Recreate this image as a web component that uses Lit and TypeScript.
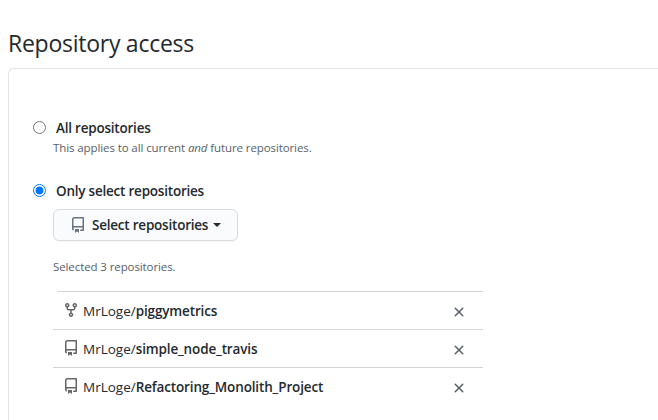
import { LitElement, html, css, svg } from "lit";
import { customElement } from "lit/decorators.js";

const REPO =
  "M2 2.5A2.5 2.5 0 014.5 0h8.75a.75.75 0 01.75.75v12.5a.75.75 0 01-.75.75h-2.5a.75.75 0 110-1.5h1.75v-2h-8a1 1 0 00-.714 1.7.75.75 0 01-1.072 1.05A2.495 2.495 0 012 11.5v-9zm10.5-1V9h-8c-.356 0-.694.074-1 .208V2.5a1 1 0 011-1h8zM5 12.25v3.25a.25.25 0 00.4.2l1.45-1.087a.25.25 0 01.3 0L8.6 15.7a.25.25 0 00.4-.2v-3.25a.25.25 0 00-.25-.25h-3.5a.25.25 0 00-.25.25z";
const FORK =
  "M5 3.25a.75.75 0 11-1.5 0 .75.75 0 011.5 0zm0 2.122a2.25 2.25 0 10-1.5 0v.878A2.25 2.25 0 005.75 8.5h1.5v2.128a2.251 2.251 0 101.5 0V8.5h1.5a2.25 2.25 0 002.25-2.25v-.878a2.25 2.25 0 10-1.5 0v.878a.75.75 0 01-.75.75h-4.5A.75.75 0 015 6.25v-.878zm3.75 7.378a.75.75 0 11-1.5 0 .75.75 0 011.5 0zm3-8.75a.75.75 0 100-1.5.75.75 0 000 1.5z";
const CLOSE =
  "M3.72 3.72a.75.75 0 011.06 0L8 6.94l3.22-3.22a.75.75 0 111.06 1.06L9.06 8l3.22 3.22a.75.75 0 11-1.06 1.06L8 9.06l-3.22 3.22a.75.75 0 01-1.06-1.06L6.94 8 3.72 4.78a.75.75 0 010-1.06z";

const icon = (d: string) =>
  html`<svg class="icon" viewBox="0 0 16 16" width="16" height="16" aria-hidden="true">${svg`<path fill-rule="evenodd" d=${d}></path>`}</svg>`;

const REPOS = [
  { owner: "MrLoge", name: "piggymetrics", kind: "fork" },
  { owner: "MrLoge", name: "simple_node_travis", kind: "repo" },
  { owner: "MrLoge", name: "Refactoring_Monolith_Project", kind: "repo" },
];

@customElement("app-root")
export class AppRoot extends LitElement {
  static styles = css`
    :host {
      display: block;
      height: 420px;
      overflow: hidden;
      box-sizing: border-box;
      padding: 25px 0 0 8px;
      background: #fff;
      color: #24292e;
      font: 13.5px/20px "Open Sans", "Noto Sans", sans-serif;
    }
    * { box-sizing: border-box; }
    h2 {
      margin: 0 0 7px;
      font-size: 23px;
      line-height: 36px;
      font-weight: 400;
      letter-spacing: -0.26px;
      white-space: nowrap;
    }
    .box {
      border: 1px solid #e1e4e8;
      border-right: 0;
      border-radius: 6px 0 0 0;
      height: 500px;
      padding: 49px 0 0 24px;
    }
    .option {
      display: flex;
      align-items: center;
      gap: 10px;
      height: 20px;
      font-weight: 600;
      letter-spacing: -0.22px;
    }
    .radio {
      width: 13px;
      height: 13px;
      margin-bottom: 2px;
      border: 1px solid #767676;
      border-radius: 50%;
      background: #fff;
    }
    .radio.on {
      border-color: #0075ff;
      background: radial-gradient(circle, #0075ff 3.6px, #fff 4.3px);
    }
    .details { padding-left: 20px; }
    .note {
      display: block;
      height: 18px;
      font-size: 11.5px;
      line-height: 18px;
      letter-spacing: -0.1px;
      color: #586069;
      white-space: nowrap;
    }
    .all .note { margin: 1px 0 24px; }
    .button {
      display: flex;
      align-items: center;
      width: 185px;
      height: 32px;
      margin: 8px 0 17px;
      padding: 0 16px;
      border: 1px solid #d9dcdf;
      border-radius: 6px;
      background: #fafbfc;
      box-shadow: 0 1px 0 rgba(27, 31, 35, 0.04);
      color: #24292e;
      font: inherit;
      font-weight: 600;
      letter-spacing: -0.22px;
      white-space: nowrap;
    }
    .button .icon { margin-right: 6px; fill: #6a737d; }
    .caret {
      margin-left: 5px;
      border: 4px solid transparent;
      border-top-color: #24292e;
      border-bottom: 0;
    }
    .icon { flex: none; fill: #586069; }
    .list {
      width: 430px;
      margin: 15px 0 0;
      padding: 0;
      list-style: none;
    }
    .list::before {
      content: "";
      display: block;
      height: 1px;
      margin-left: 4px;
      background: #d1d5da;
    }
    .row {
      display: flex;
      align-items: center;
      height: 38px;
      padding: 0 16px 0 10px;
      border-bottom: 1px solid #d1d5da;
      white-space: nowrap;
    }
    .row:last-child { border-bottom-color: transparent; }
    .kind { height: 16px; margin: 0 4px 2px 0; display: flex; }
    .kind .icon { fill: #666; }
    .name { flex: 1; display: flex; margin-top: 1px; letter-spacing: 0; }
    .name b { font-weight: 600; letter-spacing: -0.14px; }
    .remove { display: flex; margin-top: 3px; }
  `;

  render() {
    return html`
      <h2>Repository access</h2>
      <section class="box">
        <div class="all">
          <div class="option"><span class="radio"></span><span>All repositories</span></div>
          <div class="details">
            <span class="note">This applies to all current <i>and</i> future repositories.</span>
          </div>
        </div>
        <div class="option"><span class="radio on"></span><span>Only select repositories</span></div>
        <div class="details">
          <button class="button">${icon(REPO)}<span>Select repositories</span><span class="caret"></span></button>
          <span class="note">Selected 3 repositories.</span>
          <ul class="list">
            ${REPOS.map(
              (r) => html`<li class="row">
                <span class="kind">${icon(r.kind === "fork" ? FORK : REPO)}</span>
                <span class="name"><span>${r.owner}/</span><b>${r.name}</b></span>
                <span class="remove">${icon(CLOSE)}</span>
              </li>`
            )}
          </ul>
        </div>
      </section>
    `;
  }
}
